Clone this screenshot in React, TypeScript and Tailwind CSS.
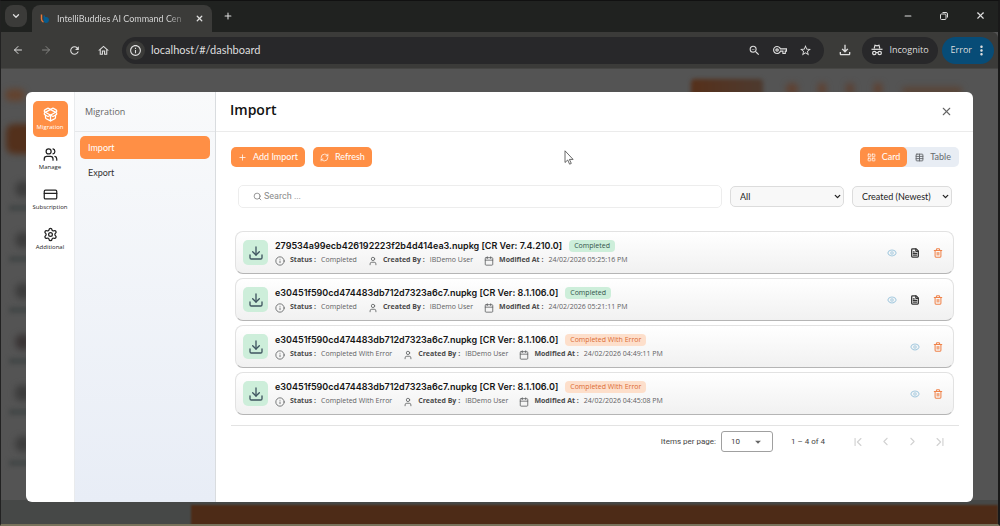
import type { ReactNode } from 'react'
import {
  ArrowLeft, ArrowRight, Calendar, ChevronDown, ChevronFirst, ChevronLast, ChevronLeft, ChevronRight, CreditCard,
  Download, Eye, FileText, Info, LayoutGrid, Minus, PackageOpen, Plus, RefreshCw, Search, Settings,
  Table, Trash2, User, Users, X,
} from 'lucide-react'
import {
  MdArrowDropDown, MdMoreVert, MdOutlineFileDownload, MdOutlineHome, MdOutlineInfo, MdOutlineStarBorder,
  MdOutlineVpnKey, MdOutlineZoomOut, MdRefresh,
} from 'react-icons/md'

type Package = {
  name: string
  version: string
  status: 'Completed' | 'Completed With Error'
  user: string
  modified: string
}

const packages: Package[] = [
  { name: '279534a99ecb426192223f2b4d414ea3.nupkg', version: '7.4.210.0', status: 'Completed', user: 'IBDemo User', modified: '24/02/2026 05:25:16 PM' },
  { name: 'e30451f590cd474483db712d7323a6c7.nupkg', version: '8.1.106.0', status: 'Completed', user: 'IBDemo User', modified: '24/02/2026 05:21:11 PM' },
  { name: 'e30451f590cd474483db712d7323a6c7.nupkg', version: '8.1.106.0', status: 'Completed With Error', user: 'IBDemo User', modified: '24/02/2026 04:49:11 PM' },
  { name: 'e30451f590cd474483db712d7323a6c7.nupkg', version: '8.1.106.0', status: 'Completed With Error', user: 'IBDemo User', modified: '24/02/2026 04:45:08 PM' },
]

const sections = [
  { label: 'Migration', icon: PackageOpen, active: true },
  { label: 'Manage', icon: Users, active: false },
  { label: 'Subscription', icon: CreditCard, active: false },
  { label: 'Additional', icon: Settings, active: false },
]

function BrowserBar() {
  return (
    <header className="text-[#dedede]">
      <div className="flex h-[31px] items-end bg-[#202220] pl-1">
        <button aria-label="Search tabs" className="mb-[5px] flex h-[22px] w-[22px] items-center justify-center rounded-lg bg-[#3b3b39]">
          <ChevronDown size={10} strokeWidth={3} />
        </button>
        <div className="ml-[5px] flex h-[27px] w-[180px] items-center rounded-t-lg bg-[#3b3b39] pr-2 pl-2">
          <svg className="h-[9px] w-[9px] shrink-0" viewBox="0 0 9 9" fill="none" aria-hidden="true">
            <path d="M1.500 0.500v4.500c0 1.500.8 2.500 2 3" stroke="#e8793a" strokeWidth="1.400" />
            <path d="M3.500 1.500h1.500v1.600c2.200-.6 4 .6 4 2.700C9 8 7.500 9 6 9 4.300 9 3.500 7.600 3.500 6z" fill="#075a8c" />
          </svg>
          <span className="ml-2 flex-1 bg-linear-to-r from-[#dedede] from-85% to-[#4a4a48] bg-clip-text font-[Lato,sans-serif] text-[9px] whitespace-nowrap text-transparent">IntelliBuddies AI Command Cen</span>
          <button aria-label="Close tab" className="ml-2"><X size={9} strokeWidth={3.500} /></button>
        </div>
        <button aria-label="New tab" className="mb-[11px] ml-[11px]"><Plus size={10} strokeWidth={2.500} /></button>
        <div className="mr-3 mb-[11px] ml-auto flex items-center gap-[26px]">
          <button aria-label="Minimize"><Minus size={10} strokeWidth={2.500} /></button>
          <button aria-label="Restore">
            <svg className="h-[10px] w-[10px]" viewBox="0 0 10 10" fill="none" stroke="currentColor" aria-hidden="true">
              <rect x="1.500" y="3" width="5.500" height="5.500" rx="1" />
              <path d="M3.500 1.500h3.500a1.500 1.500 0 0 1 1.500 1.500v3.500" />
            </svg>
          </button>
          <button aria-label="Close window"><X size={11} strokeWidth={2.500} /></button>
        </div>
      </div>

      <div className="flex h-[37px] items-center rounded-tr-md border-b border-[#464644] bg-[#3b3b39] pr-1 pl-[11px]">
        <div className="flex items-center gap-4">
          <button aria-label="Back"><ArrowLeft size={12} strokeWidth={2} /></button>
          <button aria-label="Forward" className="text-[#858583]"><ArrowRight size={12} strokeWidth={2} /></button>
          <button aria-label="Reload"><MdRefresh size={13} /></button>
          <button aria-label="Home"><MdOutlineHome size={13} /></button>
        </div>
        <div className="ml-3 flex h-[27px] flex-1 items-center rounded-full bg-[#28282a] pr-3 pl-1">
          <span className="flex h-[19px] w-[19px] items-center justify-center rounded-full bg-[#3b3b39]"><MdOutlineInfo size={13} /></span>
          <input aria-label="Address" defaultValue="localhost/#/dashboard" className="ml-[6px] min-w-0 flex-1 bg-transparent font-[Lato,sans-serif] text-[11px] outline-none" />
          <div className="flex items-center gap-3">
            <MdOutlineZoomOut size={13} />
            <MdOutlineVpnKey size={14} />
            <MdOutlineStarBorder size={13} />
          </div>
        </div>
        <button aria-label="Downloads" className="ml-[13px]"><MdOutlineFileDownload size={16} /></button>
        <button className="ml-[9px] flex h-[27px] items-center gap-[6px] rounded-full bg-[#28282a] px-[9px] text-[9px]">
          <svg className="h-3 w-3" viewBox="0 0 12 12" fill="none" stroke="currentColor" aria-hidden="true">
            <path d="M3.200 4.500 4 1.200l2 .6 2-.6.8 3.300" strokeWidth="1.200" />
            <path d="M.5 5.300h11" strokeWidth="1.200" />
            <circle cx="3.300" cy="9" r="1.700" strokeWidth="1.200" />
            <circle cx="8.700" cy="9" r="1.700" strokeWidth="1.200" />
            <path d="M5 8.700q1-.7 2 0" />
          </svg>
          Incognito
        </button>
        <button className="ml-1 flex h-[27px] items-center gap-[2px] rounded-full bg-[#074c77] pr-[5px] pl-[9px] text-[9px]">
          Error <MdMoreVert size={15} />
        </button>
      </div>
    </header>
  )
}

// Dimmed dashboard that stays behind the dialog
function Backdrop() {
  return (
    <div className="absolute inset-0 overflow-hidden" aria-hidden="true">
      <div className="absolute top-5 left-1 h-3 w-5 rounded-full bg-[#63432f] blur-[3px]"></div>
      <div className="absolute top-[55px] left-[5px] h-[30px] w-10 rounded-lg bg-[#53301b] blur-[3px]"></div>
      <div className="flex flex-col gap-[35px] pt-[112px] pl-[14px] blur-[3px]">
        <span className="h-4 w-4 rounded-full bg-[#3d3d3d]"></span>
        <span className="h-4 w-4 rounded-full bg-[#3d3d3d]"></span>
        <span className="h-4 w-4 rounded-full bg-[#3d3d3d]"></span>
        <span className="h-4 w-4 rounded-full bg-[#3a3536]"></span>
        <span className="h-4 w-4 rounded-md bg-[#3d3d3d]"></span>
        <span className="h-4 w-4 rounded-full bg-[#3d3d3d]"></span>
      </div>
      <div className="absolute top-[136px] left-2 flex flex-col gap-[45px] blur-[2px]">
        <span className="h-[6px] w-6 bg-[#434747]"></span>
        <span className="h-[6px] w-6 bg-[#434747]"></span>
        <span className="h-[6px] w-6 bg-[#434747]"></span>
        <span className="h-[6px] w-6 bg-[#434747]"></span>
        <span className="h-[6px] w-6 bg-[#434747]"></span>
        <span className="h-[6px] w-6 bg-[#434747]"></span>
      </div>
      <div className="absolute top-[10px] right-[235px] h-5 w-[72px] rounded bg-linear-to-r from-[#56301a] to-[#4d3a2f] blur-[2px]"></div>
      <div className="absolute top-[14px] right-[36px] flex items-end gap-5 blur-[3px]">
        <span className="h-3 w-3 rounded-full bg-[#60402f]"></span>
        <span className="h-3 w-2 rounded-full bg-[#60402f]"></span>
        <span className="h-3 w-2 rounded-full bg-[#5c4032]"></span>
        <span className="h-3 w-2 rounded-full bg-[#60402f]"></span>
        <span className="h-2 w-[60px] rounded bg-[#5a4436]"></span>
      </div>
      <div className="absolute right-0 bottom-0 left-0 h-6 bg-[#464847]"></div>
      <div className="absolute right-0 -bottom-1 left-[190px] h-[23px] bg-[#4d2b17] blur-[1px]"></div>
    </div>
  )
}

function Meta({ icon, label, value }: { icon: ReactNode; label: string; value: string }) {
  return (
    <span className="flex items-center gap-[5px] text-[#5f6163]">
      {icon}
      <b className="font-bold text-[#4a4a4a]">{label} :</b>
      <span>{value}</span>
    </span>
  )
}

function PackageCard({ item }: { item: Package }) {
  const done = item.status === 'Completed'
  return (
    <li className="flex h-[43px] items-center rounded-lg border border-[#e2e2e2] border-b-[#b5b5b5] bg-linear-to-b from-white to-[#f1f1f1] pr-[10px] pl-[7px]">
      <div className="flex h-[25px] w-[25px] items-center justify-center rounded-[5px] bg-[#cdeeda] text-[#3f5560]">
        <Download size={16} strokeWidth={2} />
      </div>
      <div className="ml-[7px] flex-1">
        <div className="flex h-4 items-center gap-[7px]">
          <h3 className="font-[Inter,sans-serif] text-[9px] font-semibold text-[#151515]">{item.name} [CR Ver: {item.version}]</h3>
          <span className={done ? 'rounded bg-[#cdeeda] px-[5px] text-[7px] leading-3 text-[#33534a]' : 'rounded bg-[#fddfcb] px-[5px] text-[7px] leading-3 text-[#dc6b33]'}>{item.status}</span>
        </div>
        <div className="flex h-[13px] items-center gap-[11px] text-[7px]">
          <Meta icon={<Info size={10} strokeWidth={2} />} label="Status" value={item.status} />
          <Meta icon={<User size={10} strokeWidth={2} />} label="Created By" value={item.user} />
          <Meta icon={<Calendar size={10} strokeWidth={2} />} label="Modified At" value={item.modified} />
        </div>
      </div>
      <div className="flex items-center gap-[13px]">
        <button aria-label="View" className="text-[#a9cce0]"><Eye size={10} strokeWidth={2.500} /></button>
        {done && <button aria-label="Log" className="text-[#333333]"><FileText size={10} strokeWidth={3} /></button>}
        <button aria-label="Delete" className="text-[#f0834a]"><Trash2 size={10} strokeWidth={2.500} /></button>
      </div>
    </li>
  )
}

function SelectBox({ label, options, className }: { label: string; options: string[]; className: string }) {
  return (
    <div className={`relative ${className}`}>
      <select aria-label={label} className="block h-[21px] w-full appearance-none rounded-[5px] border border-[#dcdcdc] bg-[#f8f8f8] pl-[9px] font-[Lato,sans-serif] text-[9px] text-[#222222]">
        {options.map((o) => <option key={o}>{o}</option>)}
      </select>
      <ChevronDown size={9} strokeWidth={3.500} className="pointer-events-none absolute top-[6px] right-[2px] text-[#222222]" />
    </div>
  )
}

export default function App() {
  return (
    <div className="flex min-h-screen flex-col border-t border-r-2 border-b-2 border-l border-t-[#111111] border-r-[#191919] border-b-[#77725b] border-l-[#222222] bg-[#545454] font-['Open_Sans',sans-serif]">
      <BrowserBar />
      <main className="relative flex flex-1 flex-col">
        <Backdrop />

        <div role="dialog" aria-label="Import" className="relative mx-[25px] mt-[23px] mb-[22px] flex flex-1 overflow-hidden rounded-md bg-white">
          <nav className="flex w-[49px] flex-col items-center gap-1 border-r border-[#e9ebed] pt-[9px]">
            {sections.map(({ label, icon: Icon, active }) => (
              <button
                key={label}
                className={active ? 'flex h-9 w-[35px] flex-col items-center justify-center rounded-[5px] bg-[#ff8f45] text-[6px] leading-[10px] text-white' : 'flex h-9 w-[35px] flex-col items-center justify-center text-[6px] leading-[10px] text-[#222222]'}
              >
                <Icon size={15} strokeWidth={2} className="shrink-0" />
                {label}
              </button>
            ))}
          </nav>

          <aside className="flex w-[141px] flex-col border-r border-[#d9dcdf] bg-linear-to-b from-[#f9fafb] to-[#e8edf6] text-[9px]">
            <h2 className="flex h-10 items-center border-b border-[#e6e8ea] pl-[10px] text-[#666666]">Migration</h2>
            <div className="flex flex-col gap-[2px] px-[5px] pt-1 font-[Lato,sans-serif] text-[#333333]">
              <a href="#import" className="flex h-[23px] items-center rounded-[5px] bg-[#ff8f45] px-2 text-white">Import</a>
              <a href="#export" className="flex h-[23px] items-center px-2">Export</a>
            </div>
          </aside>

          <section className="min-w-0 flex-1">
            <div className="flex h-10 items-center justify-between border-b border-[#ebebeb] pr-5 pl-[14px]">
              <h1 className="mb-1 text-[14px] leading-5 font-semibold text-[#111111]">Import</h1>
              <button aria-label="Close" className="text-[#666666]"><X size={13} strokeWidth={2} /></button>
            </div>

            <div className="pt-[15px] pr-[14px] pl-[15px]">
              <div className="flex items-center gap-2 font-[Lato,sans-serif] text-[9px]">
                <button className="flex h-5 items-center gap-[6px] rounded-[5px] bg-[#ff8f45] px-[7px] text-white">
                  <Plus size={9} strokeWidth={2} />Add Import
                </button>
                <button className="flex h-5 items-center gap-[6px] rounded-[5px] bg-[#ff8f45] px-[7px] text-white">
                  <RefreshCw size={9} strokeWidth={2} />Refresh
                </button>
                <div className="ml-auto flex rounded-[5px] bg-[#e8edf4]">
                  <button className="flex h-5 items-center gap-[6px] rounded-[5px] bg-[#ff8f45] px-[7px] text-white">
                    <LayoutGrid size={9} strokeWidth={2} />Card
                  </button>
                  <button className="flex h-5 items-center gap-[6px] px-2 text-[#666a6e]">
                    <Table size={9} strokeWidth={2.500} />Table
                  </button>
                </div>
              </div>

              <div className="mt-[18px] flex items-center gap-2 pr-[7px] pl-[7px]">
                <label className="flex h-[23px] flex-1 items-center gap-[2px] rounded-[5px] border border-[#ededed] pl-[14px] text-[#777777]">
                  <Search size={9} strokeWidth={2} />
                  <input aria-label="Search" placeholder="Search ..." className="min-w-0 flex-1 font-[Roboto,sans-serif] text-[9px] outline-none placeholder:text-[#8a8a8a]" />
                </label>
                <SelectBox label="Status" options={['All', 'Completed', 'Completed With Error']} className="w-[114px]" />
                <SelectBox label="Sort by" options={['Created (Newest)', 'Created (Oldest)']} className="w-[100px]" />
              </div>

              <ul className="mt-[23px] flex flex-col gap-1 pr-[5px] pl-1">
                {packages.map((item) => <PackageCard key={item.modified} item={item} />)}
              </ul>

              <div className="mt-[10px] flex h-8 items-center justify-end border-t border-[#e3e3e3] pr-3 font-[Roboto,sans-serif] text-[8px] text-[#444444]">
                <label htmlFor="page-size">Items per page:</label>
                <div className="relative ml-[5px] w-[52px]">
                  <select id="page-size" className="block h-[21px] w-full appearance-none rounded-[3px] border border-[#a0a0a0] bg-white pl-[9px]">
                    <option>10</option>
                    <option>25</option>
                  </select>
                  <MdArrowDropDown size={14} className="pointer-events-none absolute top-1 right-2 text-[#666666]" />
                </div>
                <span className="ml-[18px]">1 – 4 of 4</span>
                <div className="ml-[26px] flex items-center gap-[14px] text-[#d2d2d2]">
                  <button aria-label="First page"><ChevronFirst size={14} strokeWidth={2} /></button>
                  <button aria-label="Previous page"><ChevronLeft size={13} strokeWidth={2} /></button>
                  <button aria-label="Next page"><ChevronRight size={13} strokeWidth={2} /></button>
                  <button aria-label="Last page"><ChevronLast size={14} strokeWidth={2} /></button>
                </div>
              </div>
            </div>
          </section>
        </div>

        {/* Mouse pointer */}
        <svg className="absolute top-[81px] left-[563px] h-[15px] w-[10px]" viewBox="0 0 10 15" fill="white" stroke="#444444" strokeWidth="0.800" aria-hidden="true">
          <path d="M1 .8v11.700l2.700-2.500 1.900 4.200 1.700-.8-1.900-4h3.700z" />
        </svg>
      </main>
    </div>
  )
}
